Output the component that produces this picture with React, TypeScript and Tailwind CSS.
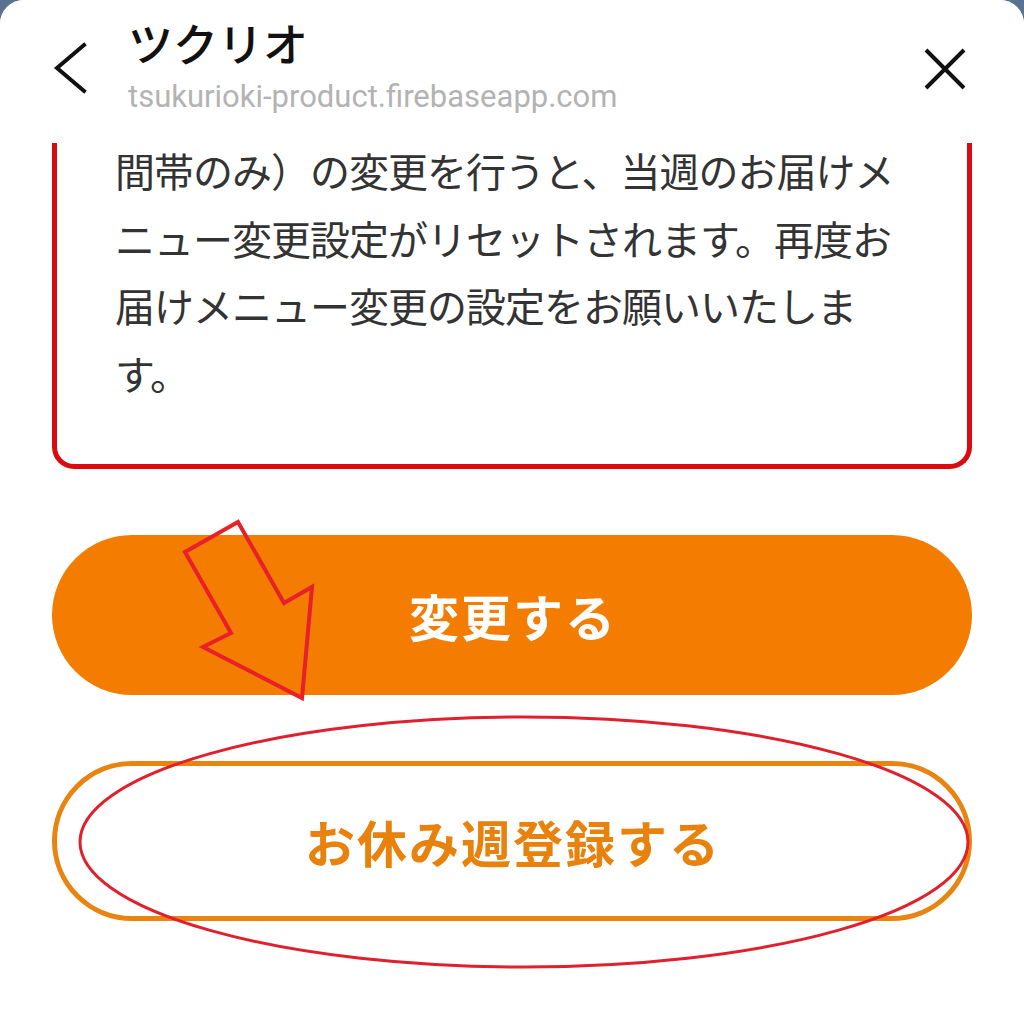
import React from "react";

const jp = { fontFamily: '"Noto Sans CJK JP", "Noto Sans", sans-serif' };

export default function App() {
  return (
    <div className="relative h-[1013px] w-[1024px] overflow-hidden bg-[#58728f]">
      <div className="flex h-full flex-col rounded-t-[24px] bg-white">
        {/* Header */}
        <div className="relative z-10 flex h-[143px] items-start rounded-t-[24px] bg-white pl-[52px] pr-[56px] pt-[20px]">
          <svg className="mt-[22px] shrink-0" width="36" height="52" viewBox="0 0 36 52" fill="none">
            <path d="M32 3 L5 26 L32 49" stroke="#111" strokeWidth="4" strokeLinecap="square" />
          </svg>
          <div className="ml-[40px] flex flex-col">
            <div className="text-[45px] font-medium leading-[46px] text-[#111]" style={jp}>ツクリオ</div>
            <div className="mt-[14px] text-[31px] leading-[34px] text-[#b3b3b3]" style={{ fontFamily: 'Roboto, "Liberation Sans", sans-serif' }}>
              tsukurioki-product.firebaseapp.com
            </div>
          </div>
          <svg className="ml-auto mt-[26px] shrink-0" width="46" height="46" viewBox="0 0 46 46" fill="none">
            <path d="M4 4 L42 42 M42 4 L4 42" stroke="#111" strokeWidth="4" />
          </svg>
        </div>

        {/* Notice box (scrolled, top hidden under header) */}
        <div className="-mt-[6px] mx-[52px] rounded-b-[22px] border-[5px] border-t-0 border-[#dc0a0f] pb-[57px] pl-[58px]">
          <div className="text-[40px] leading-[67.5px] tracking-[-1px] text-[#333]" style={jp}>
            <div className="whitespace-nowrap">間帯のみ）の変更を行うと、当週のお届けメ</div>
            <div className="whitespace-nowrap">ニュー変更設定がリセットされます。再度お</div>
            <div className="whitespace-nowrap">届けメニュー変更の設定をお願いいたしま</div>
            <div className="whitespace-nowrap">す。</div>
          </div>
        </div>

        {/* Buttons */}
        <div className="mx-[52px] mt-[66px] flex flex-col gap-[66px]">
          <button className="flex h-[160px] items-center justify-center rounded-full bg-[#f47c00]">
            <span className="pl-[2px] text-[50px] font-bold tracking-[2px] text-white" style={jp}>変更する</span>
          </button>
          <button className="flex h-[160px] items-center justify-center rounded-full border-[5px] border-[#ea8410] bg-white">
            <span className="pl-[2px] text-[50px] font-bold tracking-[2px] text-[#e8820c]" style={jp}>お休み週登録する</span>
          </button>
        </div>
      </div>

      {/* Annotation overlay */}
      <svg className="pointer-events-none absolute left-0 top-0" width="1024" height="1013" viewBox="0 0 1024 1013" fill="none">
        <polygon
          points="238,522 284,603 312,587 302,698 203,647 231,633 185,552"
          stroke="#e8202a"
          strokeWidth="4"
          strokeLinejoin="miter"
        />
        <ellipse cx="524" cy="842" rx="444" ry="125" stroke="#e0202c" strokeWidth="3" />
      </svg>
    </div>
  );
}
